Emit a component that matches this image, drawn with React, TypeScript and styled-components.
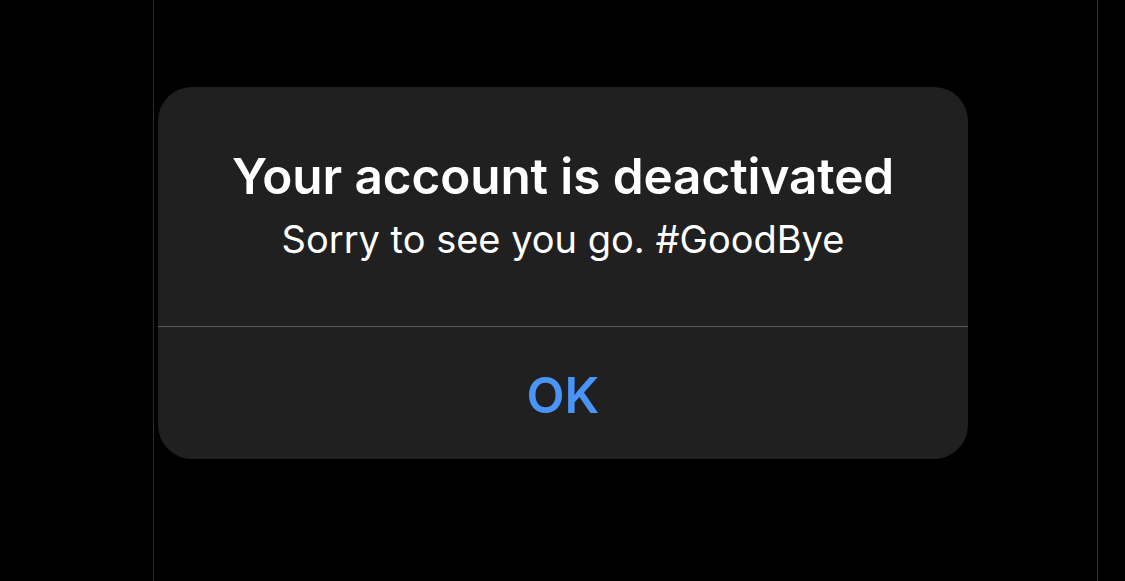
import styled, { createGlobalStyle } from "styled-components";

const GlobalStyle = createGlobalStyle`
  html, body {
    margin: 0;
    padding: 0;
    background: #000;
  }
  body {
    font-family: Inter, "Noto Sans", "Liberation Sans", sans-serif;
    -webkit-font-smoothing: antialiased;
  }
`;

const Page = styled.div`
  width: 1125px;
  height: 581px;
  background: #000;
  overflow: hidden;
`;

const Screen = styled.div`
  margin-left: 153px;
  width: 945px;
  height: 581px;
  border-left: 1px solid #2c2c2c;
  border-right: 1px solid #333;
  padding: 87px 0 0 4px;
  box-sizing: border-box;
`;

const Alert = styled.div`
  width: 810px;
  height: 372px;
  background: #202020;
  border-radius: 34px;
  display: flex;
  flex-direction: column;
  overflow: hidden;
`;

const Body = styled.div`
  height: 240px;
  display: flex;
  flex-direction: column;
  align-items: center;
  padding-top: 60px;
  box-sizing: border-box;
  border-bottom: 1px solid #5a5a5a;
`;

const Title = styled.h2`
  margin: 0;
  color: #fff;
  font-size: 49.5px;
  font-weight: 600;
  letter-spacing: -0.1px;
  line-height: 58px;
`;

const Message = styled.p`
  margin: 11px 0 0;
  color: #fff;
  font-size: 38px;
  font-weight: 400;
  line-height: 46px;
`;

const Action = styled.button`
  flex: 1;
  border: 0;
  background: transparent;
  color: #4a93f7;
  font-family: inherit;
  font-size: 49.5px;
  font-weight: 600;
  padding: 4px 0 0;
  cursor: pointer;
`;

export default function App() {
  return (
    <>
      <GlobalStyle />
      <Page>
        <Screen>
          <Alert>
            <Body>
              <Title>Your account is deactivated</Title>
              <Message>Sorry to see you go. #GoodBye</Message>
            </Body>
            <Action>OK</Action>
          </Alert>
        </Screen>
      </Page>
    </>
  );
}
